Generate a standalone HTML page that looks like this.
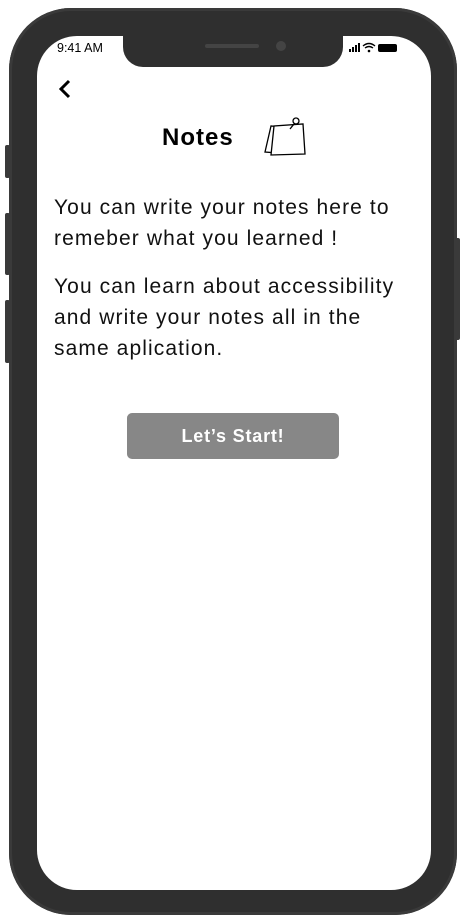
<!DOCTYPE html>
<html><head><meta charset="utf-8"><style>
*{margin:0;padding:0;box-sizing:border-box}
body{width:461px;height:916px;background:#fff;position:relative;overflow:hidden;font-family:"Liberation Sans",sans-serif}
.btn-side{position:absolute;background:#3a3a3a;border-radius:2px}
.phone{position:absolute;left:9px;top:8px;width:448px;height:907px;background:#2f2f2f;border-radius:62px;box-shadow:inset 0 0 0 3px #3a3a3a}
.screen{position:absolute;left:37px;top:36px;width:394px;height:854px;background:#fff;border-radius:40px;overflow:hidden}
.notch{position:absolute;left:86px;top:0;width:220px;height:31px;background:#2f2f2f;border-radius:0 0 20px 20px}
.speaker{position:absolute;left:82px;top:8px;width:54px;height:4px;background:#444;border-radius:2px}
.cam{position:absolute;left:153px;top:5px;width:10px;height:10px;background:#444;border-radius:50%}
.time{position:absolute;left:20px;top:5px;font-size:12.5px;color:#000}
.p{position:absolute;left:17px;font-size:21px;color:#111;line-height:31px;letter-spacing:1.1px;white-space:nowrap}
.btn{position:absolute;left:90px;top:377px;width:212px;height:46px;background:#878787;border-radius:5px;color:#fff;font-weight:bold;font-size:18px;text-align:center;line-height:46px;letter-spacing:0.8px}
</style></head><body>
<div class="btn-side" style="left:5px;top:145px;width:5px;height:33px"></div>
<div class="btn-side" style="left:5px;top:213px;width:5px;height:62px"></div>
<div class="btn-side" style="left:5px;top:300px;width:5px;height:63px"></div>
<div class="btn-side" style="left:455px;top:238px;width:5px;height:102px"></div>
<div class="phone"></div>
<div class="screen">
<div class="notch"><div class="speaker"></div><div class="cam"></div></div>
<div class="time">9:41 AM</div>
<svg style="position:absolute;left:312px;top:6px" width="50" height="12" viewBox="0 0 50 12">
<rect x="0" y="7" width="2" height="3" fill="#000"/><rect x="3" y="5" width="2" height="5" fill="#000"/><rect x="6" y="3" width="2" height="7" fill="#000"/><rect x="9" y="1" width="2" height="9" fill="#000"/>
<path d="M14 4 Q20 -1 26 4 M16 6 Q20 3 24 6" stroke="#000" stroke-width="1.4" fill="none"/><circle cx="20" cy="9" r="1.3" fill="#000"/>
<rect x="29" y="2" width="19" height="8" rx="2" fill="#000"/>
</svg>
<svg style="position:absolute;left:20px;top:43px" width="16" height="20" viewBox="0 0 16 20"><path d="M12 2 L4 10 L12 18" stroke="#000" stroke-width="3" fill="none"/></svg>
<div style="position:absolute;left:125px;top:88px;font-size:24px;font-weight:bold;color:#000;letter-spacing:1px">Notes</div>
<svg style="position:absolute;left:226px;top:80px" width="46" height="42" viewBox="0 0 46 42">
<path d="M8 10 L2 36 L28 38 L27 12 Z" stroke="#000" stroke-width="1.3" fill="#fff"/>
<path d="M11 10 L8 39 L42 38 L40 8 Z" stroke="#000" stroke-width="1.3" fill="#fff"/>
<circle cx="33" cy="5" r="3" stroke="#000" stroke-width="1.3" fill="#fff"/>
<path d="M31 8 L27 13" stroke="#000" stroke-width="1.3"/>
</svg>
<div class="p" style="top:156px">You can write your notes here to<br>remeber what you learned !</div>
<div class="p" style="top:235px">You can learn about accessibility<br>and write your notes all in the<br>same aplication.</div>
<div class="btn">Let’s Start!</div>
</div>
</body></html>
